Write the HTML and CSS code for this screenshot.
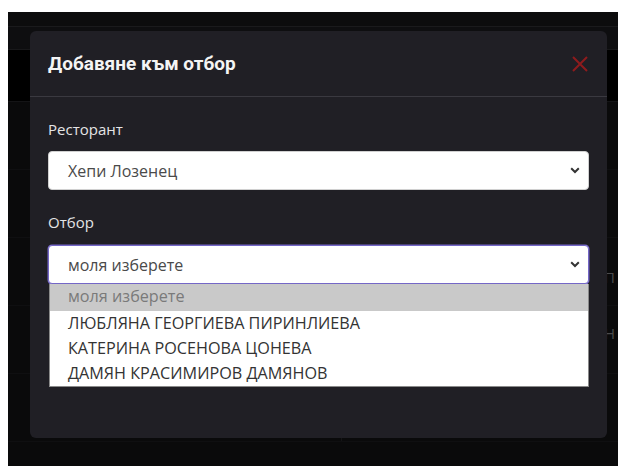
FILE: index.html
```html
<!DOCTYPE html>
<html lang="bg">
<head>
<meta charset="utf-8">
<title>Добавяне към отбор</title>
<link rel="stylesheet" href="styles.css">
</head>
<body>
<div class="crumbs"><span>Ядро групу проф</span></div>
<div class="page">
  <div class="table">
    <div class="row r-top"></div>
    <div class="row r-head"></div>
    <div class="row r-bar"></div>
    <div class="row r-item"><div class="cell main"></div><div class="cell side"></div></div>
    <div class="row r-item"><div class="cell main"></div><div class="cell side"></div></div>
    <div class="row r-item"><div class="cell main"></div><div class="cell side side-a">П</div></div>
    <div class="row r-item"><div class="cell main"></div><div class="cell side side-b">Н</div></div>
    <div class="row r-item"><div class="cell main"></div><div class="cell side"></div></div>
  </div>

  <div class="modal">
    <div class="modal-header">
      <h2 class="modal-title">Добавяне към отбор</h2>
      <span class="close" aria-label="Затвори">
        <svg width="16" height="16" viewBox="0 0 16 16"><path d="M1 1 L15 15 M15 1 L1 15" stroke="#8e1b1d" stroke-width="2" fill="none"/></svg>
      </span>
    </div>
    <div class="modal-body">
      <div class="field">
        <label class="label">Ресторант</label>
        <div class="select">
          <span>Хепи Лозенец</span>
          <svg class="chev" width="10" height="7" viewBox="0 0 10 7"><path d="M1.2 1.3 L5 5 L8.8 1.3" stroke="#333" stroke-width="2" fill="none"/></svg>
        </div>
      </div>
      <div class="field">
        <label class="label">Отбор</label>
        <div class="select-wrap">
          <div class="select focused">
            <span>моля изберете</span>
            <svg class="chev" width="10" height="7" viewBox="0 0 10 7"><path d="M1.2 1.3 L5 5 L8.8 1.3" stroke="#333" stroke-width="2" fill="none"/></svg>
          </div>
          <ul class="options">
            <li class="opt active">моля изберете</li>
            <li class="opt">ЛЮБЛЯНА ГЕОРГИЕВА ПИРИНЛИЕВА</li>
            <li class="opt">КАТЕРИНА РОСЕНОВА ЦОНЕВА</li>
            <li class="opt">ДАМЯН КРАСИМИРОВ ДАМЯНОВ</li>
          </ul>
        </div>
      </div>
    </div>
  </div>
</div>
</body>
</html>
```
FILE: styles.css
```css
* { box-sizing: border-box; }

html, body {
  margin: 0;
  background: #fff;
  font-family: "Open Sans", "Liberation Sans", sans-serif;
}

/* breadcrumb line, mostly scrolled off the top */
.crumbs {
  height: 12px;
  overflow: hidden;
  padding-left: 20px;
}
.crumbs span {
  display: block;
  margin-top: -23px;
  font-size: 18px;
  line-height: 18px;
  color: #111;
}

.page {
  margin-left: 8px;
  height: 454px;
  background: #0a0a0b;
  position: relative;
  overflow: hidden;
}

/* dimmed table behind the dialog */
.table { display: flex; flex-direction: column; }
.row { display: flex; }
.r-top { height: 15px; background: #0c0c0d; border-bottom: 1px solid #1a1a1c; }
.r-head { height: 23px; background: #0e0e10; border-bottom: 1px solid #18181a; }
.r-bar { height: 52px; background: #000; border-bottom: 1px solid #141416; }
.r-item { height: 68px; background: #0a0a0b; border-bottom: 1px solid #0f0f11; }
.cell.main { width: 334px; border-right: 1px solid #141416; }
.cell.side {
  flex: 1;
  display: flex;
  align-items: center;
  padding-left: 262px;
  font-size: 15px;
  color: #4a4a4c;
}
.side-a { padding-top: 10px; }
.side-b { padding-bottom: 14px; }

/* dialog */
.modal {
  position: absolute;
  left: 22px;
  top: 19px;
  width: 577px;
  height: 407px;
  background: #201f25;
  border-radius: 6px;
}

.modal-header {
  height: 66px;
  display: flex;
  align-items: center;
  justify-content: space-between;
  padding: 0 19px 0 18px;
  border-bottom: 1px solid #3a3940;
}
.modal-title {
  margin: 0;
  font-family: Roboto, "Liberation Sans", sans-serif;
  font-weight: 700;
  font-size: 19px;
  color: #f4f4f4;
}
.close { display: flex; width: 16px; height: 16px; }

.modal-body {
  padding: 22px 18px 0 18px;
  display: flex;
  flex-direction: column;
  gap: 22px;
}

.field { display: flex; flex-direction: column; gap: 11px; }
.label {
  font-size: 15px;
  line-height: 21px;
  color: #e4e4e6;
}

.select {
  height: 39px;
  background: #fff;
  border: 1px solid #d0d0d0;
  border-radius: 4px;
  display: flex;
  align-items: center;
  justify-content: space-between;
  padding: 0 8px 0 19px;
  font-size: 16px;
  color: #4a4a4a;
}
.select.focused {
  margin-top: 1px;
  border-color: #7467c7;
  box-shadow: 0 0 0 0.5px #7467c7;
}
.chev { display: block; }

.select-wrap { position: relative; }

/* open option list of the team select */
.options {
  position: absolute;
  left: 1px;
  right: 0;
  top: 40px;
  margin: 0;
  padding: 0;
  list-style: none;
  background: #fff;
  border: 1px solid #8a8a8a;
  border-top: 0;
}
.opt {
  height: 25px;
  line-height: 25px;
  padding-left: 18px;
  font-size: 16.2px;
  color: #333;
}
.opt.active {
  height: 27px;
  line-height: 24px;
  background: #c9c9c9;
  color: #7a7a7a;
}
```
